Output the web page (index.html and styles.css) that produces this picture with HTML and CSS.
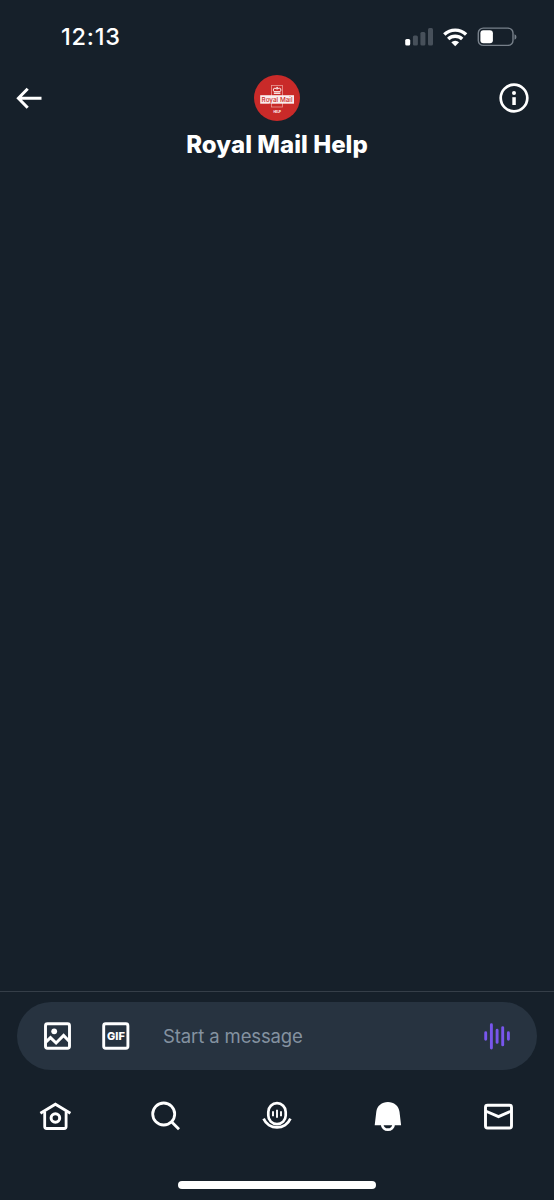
FILE: index.html
```html
<!DOCTYPE html>
<html lang="en">
<head>
<meta charset="utf-8">
<title>Royal Mail Help</title>
<link rel="stylesheet" href="styles.css">
</head>
<body>
<div class="screen">
  <div class="status">
    <span class="time">12:13</span>
    <svg class="indicators" width="120" height="24" viewBox="400 25 120 24">
      <g fill="#47505a"><rect x="412.900" y="35.500" width="5" height="10" rx="1.500"/><rect x="420.400" y="32" width="5" height="13.500" rx="1.500"/><rect x="428" y="28" width="5" height="17.500" rx="1.500"/></g>
      <rect x="405.200" y="39" width="5" height="6.500" rx="1.500" fill="#fff"/>
      <g fill="none" stroke="#fff" stroke-width="3.400"><path d="M444.300 34.500a15.800 15.800 0 0 1 21.800 0"/><path d="M448.200 39a10.200 10.200 0 0 1 14 0"/></g>
      <path d="M451.300 42.300a5.800 5.800 0 0 1 7.800 0l-3.900 3.900z" fill="#fff"/>
      <rect x="478.300" y="28.100" width="34.700" height="17.300" rx="5" fill="none" stroke="#77808a" stroke-width="1.400"/>
      <path d="M514.500 34.300q2 .7 2 2.700t-2 2.700z" fill="#77808a"/>
      <rect x="480.400" y="30.300" width="12.500" height="13" rx="3" fill="#fff"/>
    </svg>
  </div>
  <header class="header">
    <svg class="back" width="28" height="28" viewBox="15 84 28 28" fill="none" stroke="#fff" stroke-width="3"><path d="M41.500 98.200H18.500M27.700 88.700l-9.300 9.500 9.300 9.500"/></svg>
    <div class="contact">
      <svg width="46" height="46" viewBox="254 75 46 46">
        <circle cx="277" cy="98" r="23" fill="#c92a29"/>
        <rect x="271.500" y="85.500" width="11" height="21.500" fill="none" stroke="#e99b96" stroke-width=".8"/>
        <path d="M274 91.600l-.7-1.400q-.2-2 1.600-2 1.300 0 1.700 1 .1-.8.100-1.900h.8q0 1.100.1 1.900.4-1 1.700-1 1.800 0 1.600 2l-.7 1.400z" fill="none" stroke="#fff" stroke-width=".9"/>
        <path d="M273.800 93.200h6.600" stroke="#fff" stroke-width="1.300"/>
        <rect x="260.200" y="95.200" width="33.800" height="8.500" fill="#f9eeee"/>
        <text class="brand" x="277.100" y="101.500" text-anchor="middle" textLength="31" lengthAdjust="spacingAndGlyphs">Royal Mail</text>
        <text class="brand-sub" x="277.200" y="112.500" text-anchor="middle" textLength="7.500" lengthAdjust="spacingAndGlyphs">HELP</text>
      </svg>
      <h1 class="name">Royal Mail Help</h1>
    </div>
    <svg class="info" width="30" height="30" viewBox="499 83 30 30"><circle cx="514" cy="98" r="13.300" fill="none" stroke="#fff" stroke-width="2.700"/><circle cx="514" cy="93" r="2" fill="#fff"/><path d="M512.300 97.200h3.500v7.800h-3.500z" fill="#fff"/></svg>
  </header>
  <main class="messages"></main>
  <section class="composer">
    <div class="pill">
      <svg width="28" height="28" viewBox="43 1022.500 28 28"><rect x="45.500" y="1024.300" width="24" height="24.400" rx="2" fill="none" stroke="#fff" stroke-width="2.900"/><circle cx="54.200" cy="1031.800" r="2.900" fill="#fff"/><path d="M45.500 1042.900l5-4.800 5.600 5.400 7.500-7.500 6 6.200" fill="none" stroke="#fff" stroke-width="3"/></svg>
      <svg class="gif" width="28" height="28" viewBox="102 1022.500 28 28"><rect x="103.700" y="1024.300" width="24.200" height="24.400" rx="2" fill="none" stroke="#fff" stroke-width="2.900"/><text class="gif-label" x="115.900" y="1040.600" text-anchor="middle" textLength="18" lengthAdjust="spacing">GIF</text></svg>
      <span class="placeholder">Start a message</span>
      <svg class="wave" width="28" height="28" viewBox="483 1022.500 28 28" fill="none" stroke="#7856ec" stroke-width="2.900" stroke-linecap="round"><path d="M485.700 1033.200v6.600M491.400 1025.200v23.300M497.100 1030.800v12.100M502.700 1028.100v17.300M508.400 1033.200v6.600"/></svg>
    </div>
  </section>
  <nav class="tabs">
    <svg width="34" height="32" viewBox="38 1100 34 32" fill="none" stroke="#fff" stroke-width="2.800" stroke-linejoin="round"><path d="M40.400 1113.200l15-9 15 9" stroke-linejoin="miter"/><path d="M44.700 1111.500v15q0 2 2 2h17.400q2 0 2-2v-15"/><circle cx="55.400" cy="1118" r="4.300" stroke-width="3"/></svg>
    <svg width="34" height="32" viewBox="149 1100 34 32" fill="none" stroke="#fff" stroke-width="2.800"><circle cx="163.700" cy="1114" r="11"/><path d="M171.500 1121.800l7.500 7.500"/></svg>
    <svg width="34" height="32" viewBox="260 1100 34 32" fill="none" stroke="#fff" stroke-width="2.700"><rect x="268.300" y="1103.200" width="17.400" height="21" rx="8.700"/><path d="M263.600 1118.600a14.600 14.600 0 0 0 26.800 0"/><path d="M273 1111.200v5M277 1109.700v8M281 1111.200v5" stroke-width="1.900"/></svg>
    <svg width="34" height="32" viewBox="371 1100 34 32"><path d="M374.700 1125.300l1.600-13.500c.7-6 5.600-9.800 11.600-9.800s10.900 3.800 11.600 9.800l1.600 13.500z" fill="#fff"/><path d="M382.200 1124.500a5.700 5.200 0 0 0 11.400 0" fill="none" stroke="#fff" stroke-width="2.700"/></svg>
    <svg width="34" height="32" viewBox="482 1100 34 32" fill="none" stroke="#fff" stroke-width="2.900"><rect x="485.500" y="1105.200" width="26" height="22.800" rx="2"/><path d="M485.500 1111l13 5.600 13-5.600"/></svg>
  </nav>
  <div class="home-bar"></div>
</div>
</body>
</html>
```
FILE: styles.css
```css
* { box-sizing: border-box; }
body { margin: 0; background: #16202a; color: #fff; font-family: Inter, "Liberation Sans", sans-serif; }
svg { display: block; flex: none; }
.screen { display: flex; flex-direction: column; width: 554px; height: 1200px; overflow: hidden; }
.status { display: flex; justify-content: space-between; height: 75px; padding: 25px 34px 0 61px; }
.time { font-size: 23.5px; line-height: 24px; font-weight: 500; letter-spacing: .8px; }
.header { display: grid; grid-template-columns: 1fr auto 1fr; align-items: start; height: 95px; padding: 0 25px; }
.back { margin: 9px 0 0 -10px; }
.info { margin-top: 8px; justify-self: end; }
.contact { display: flex; flex-direction: column; align-items: center; }
.name { margin: 8px 0 0; font-size: 24px; line-height: 31px; font-weight: 800; letter-spacing: .05px; white-space: nowrap; }
.brand { font-size: 6.5px; font-weight: 500; fill: #c92a29; }
.brand-sub { font-size: 3.5px; font-weight: 700; fill: #fff; }
.messages { flex: 1; }
.composer { height: 95px; padding: 10.4px 17px 0; border-top: 1px solid #353e48; }
.pill { display: flex; align-items: center; height: 68px; padding: 0 26px; border-radius: 34px; background: #273340; }
.gif { margin-left: 31px; }
.gif-label { font-size: 11px; font-weight: 800; fill: #fff; }
.placeholder { flex: 1; margin-left: 33px; color: #8492a0; font-size: 18.5px; line-height: 28px; letter-spacing: -.12px; }
.tabs { display: flex; justify-content: space-between; height: 95px; padding: 14px 38px 0; }
.home-bar { width: 198px; height: 8px; margin: 0 auto 11px; border-radius: 4px; background: #fff; }
```
